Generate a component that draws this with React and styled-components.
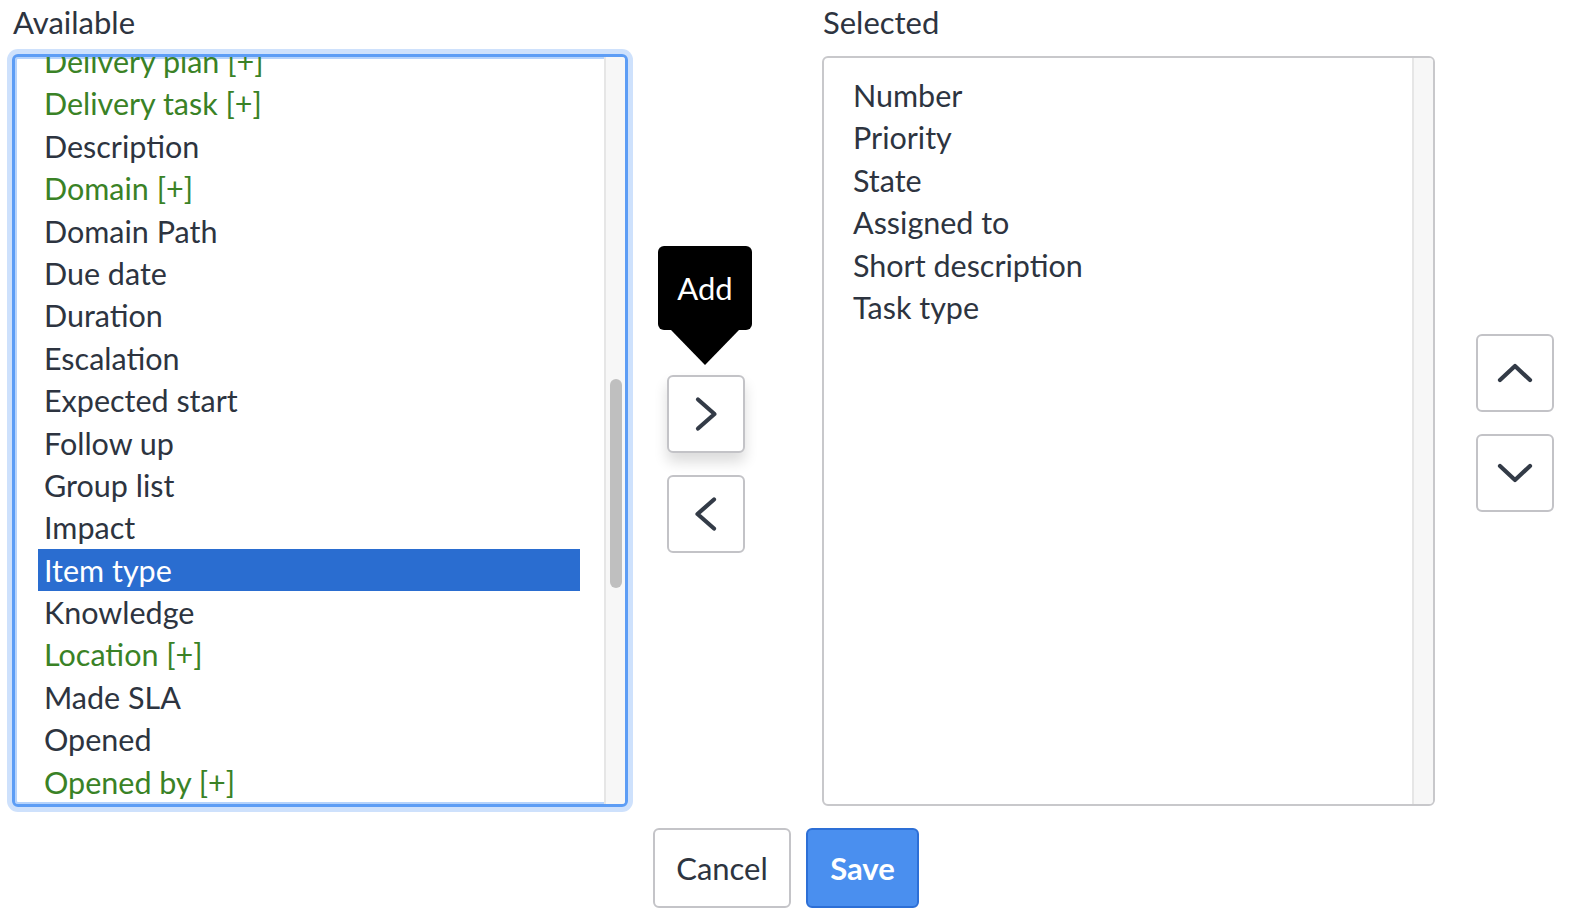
import React from 'react';
import styled, { createGlobalStyle } from 'styled-components';

const GlobalStyle = createGlobalStyle`
	html, body {
		margin: 0;
		padding: 0;
		background: #ffffff;
	}
	body {
		font-family: Lato, 'Noto Sans', sans-serif;
		color: #2d3440;
	}
`;

const Page = styled.div`
	width: 1572px;
	height: 922px;
	overflow: hidden;
`;

const Columns = styled.div`
	display: flex;
	align-items: flex-start;
	padding-left: 12px;
`;

const Column = styled.div`
	width: ${(p) => p.width}px;
	flex-shrink: 0;
`;

const Label = styled.div`
	font-size: 31px;
	line-height: 44px;
	height: 44px;
	margin-bottom: ${(p) => p.gap}px;
	padding-left: 1px;
	color: #2d3440;
	white-space: nowrap;
`;

const ListBox = styled.div`
	box-sizing: border-box;
	height: ${(p) => p.height}px;
	display: flex;
	border-radius: 6px;
	overflow: hidden;
	background: #ffffff;
	border: ${(p) => (p.focused ? '3px solid #5d9df5' : '2px solid #c8c8cb')};
	box-shadow: ${(p) =>
		p.focused
			? '0 0 0 5px rgba(93, 157, 245, 0.3), inset 0 0 0 2px #b6d3fb'
			: 'none'};
`;

const Viewport = styled.div`
	flex: 1;
	overflow: hidden;
	padding: ${(p) => p.top}px 24px 0 23px;
`;

const Options = styled.ul`
	list-style: none;
	margin: ${(p) => p.offset}px 0 0 0;
	padding: 0;
`;

const Option = styled.li`
	font-size: 30.5px;
	line-height: 42.4px;
	height: 42.4px;
	padding-left: 6px;
	white-space: nowrap;
	color: ${(p) => (p.selected ? '#ffffff' : p.reference ? '#3a8226' : '#2d3440')};
	background: ${(p) => (p.selected ? '#2a6dd0' : 'transparent')};
`;

const ScrollTrack = styled.div`
	width: 19px;
	flex-shrink: 0;
	background: #f7f7f7;
	border-left: 2px solid #e6e6e6;
`;

const ScrollThumb = styled.div`
	width: 12px;
	height: 209px;
	margin: 322px 0 0 4px;
	border-radius: 6px;
	background: #bfbfbf;
`;

const MoveColumn = styled.div`
	width: 194px;
	flex-shrink: 0;
	box-sizing: border-box;
	padding: 375px 0 0 39px;
	display: flex;
	flex-direction: column;
	gap: 22px;
`;

const OrderColumn = styled.div`
	box-sizing: border-box;
	padding: 334px 0 0 41px;
	display: flex;
	flex-direction: column;
	gap: 22px;
`;

const IconButton = styled.button`
	position: relative;
	box-sizing: border-box;
	width: 78px;
	height: 78px;
	padding: 0;
	display: flex;
	align-items: center;
	justify-content: center;
	background: #ffffff;
	border: 2px solid #c3c3c7;
	border-radius: 6px;
	box-shadow: ${(p) => (p.hovered ? '0 9px 14px rgba(0, 0, 0, 0.14)' : 'none')};
	cursor: pointer;
`;

const Tooltip = styled.div`
	position: absolute;
	left: -11px;
	top: -131px;
	width: 94px;
	height: 84px;
	display: flex;
	align-items: center;
	justify-content: center;
	background: #000000;
	color: #ffffff;
	border-radius: 6px;
	font-size: 31px;
	font-family: Lato, 'Noto Sans', sans-serif;

	&::after {
		content: '';
		position: absolute;
		top: 100%;
		left: 50%;
		transform: translateX(-50%);
		border-left: 34px solid transparent;
		border-right: 34px solid transparent;
		border-top: 35px solid #000000;
	}
`;

const Footer = styled.div`
	display: flex;
	justify-content: center;
	gap: 15px;
	margin-top: 21px;
`;

const ActionButton = styled.button`
	box-sizing: border-box;
	height: 80px;
	width: ${(p) => p.width}px;
	padding: 0;
	font-family: Lato, 'Noto Sans', sans-serif;
	font-size: 31px;
	font-weight: ${(p) => (p.primary ? 700 : 400)};
	color: ${(p) => (p.primary ? '#ffffff' : '#2d3440')};
	background: ${(p) => (p.primary ? '#4a8fef' : '#ffffff')};
	border: 2px solid ${(p) => (p.primary ? '#2d6fd6' : '#c4c4c8')};
	border-radius: 6px;
	cursor: pointer;
`;

const Chevron = ({ dir }) => {
	const paths = {
		right: { w: 24, h: 36, d: 'M4 3.5 L20.5 18 L4 32.5' },
		left: { w: 24, h: 36, d: 'M20 3.5 L3.5 18 L20 32.5' },
		up: { w: 36, h: 22, d: 'M3 18 L18 4 L33 18' },
		down: { w: 36, h: 22, d: 'M3 4 L18 18 L33 4' },
	};
	const p = paths[dir];
	return (
		<svg width={p.w} height={p.h} viewBox={`0 0 ${p.w} ${p.h}`} fill="none">
			<path
				d={p.d}
				stroke="#333b47"
				strokeWidth="4.2"
				strokeLinecap="round"
				strokeLinejoin="round"
			/>
		</svg>
	);
};

const available = [
	{ label: 'Delivery plan [+]', reference: true },
	{ label: 'Delivery task [+]', reference: true },
	{ label: 'Description' },
	{ label: 'Domain [+]', reference: true },
	{ label: 'Domain Path' },
	{ label: 'Due date' },
	{ label: 'Duration' },
	{ label: 'Escalation' },
	{ label: 'Expected start' },
	{ label: 'Follow up' },
	{ label: 'Group list' },
	{ label: 'Impact' },
	{ label: 'Item type', selected: true },
	{ label: 'Knowledge' },
	{ label: 'Location [+]', reference: true },
	{ label: 'Made SLA' },
	{ label: 'Opened' },
	{ label: 'Opened by [+]', reference: true },
];

const selected = ['Number', 'Priority', 'State', 'Assigned to', 'Short description', 'Task type'];

export default function App() {
	return (
		<Page>
			<GlobalStyle />
			<Columns>
				<Column width={616}>
					<Label gap={10}>Available</Label>
					<ListBox focused height={753}>
						<Viewport top={0}>
							<Options offset={-17}>
								{available.map((item) => (
									<Option
										key={item.label}
										selected={item.selected}
										reference={item.reference}
									>
										{item.label}
									</Option>
								))}
							</Options>
						</Viewport>
						<ScrollTrack>
							<ScrollThumb />
						</ScrollTrack>
					</ListBox>
				</Column>

				<MoveColumn>
					<IconButton hovered aria-label="Add">
						<Tooltip>Add</Tooltip>
						<Chevron dir="right" />
					</IconButton>
					<IconButton aria-label="Remove">
						<Chevron dir="left" />
					</IconButton>
				</MoveColumn>

				<Column width={613}>
					<Label gap={12}>Selected</Label>
					<ListBox height={750}>
						<Viewport top={16}>
							<Options offset={0}>
								{selected.map((name) => (
									<Option key={name}>{name}</Option>
								))}
							</Options>
						</Viewport>
						<ScrollTrack />
					</ListBox>
				</Column>

				<OrderColumn>
					<IconButton aria-label="Move up">
						<Chevron dir="up" />
					</IconButton>
					<IconButton aria-label="Move down">
						<Chevron dir="down" />
					</IconButton>
				</OrderColumn>
			</Columns>

			<Footer>
				<ActionButton width={138}>Cancel</ActionButton>
				<ActionButton width={113} primary>
					Save
				</ActionButton>
			</Footer>
		</Page>
	);
}
